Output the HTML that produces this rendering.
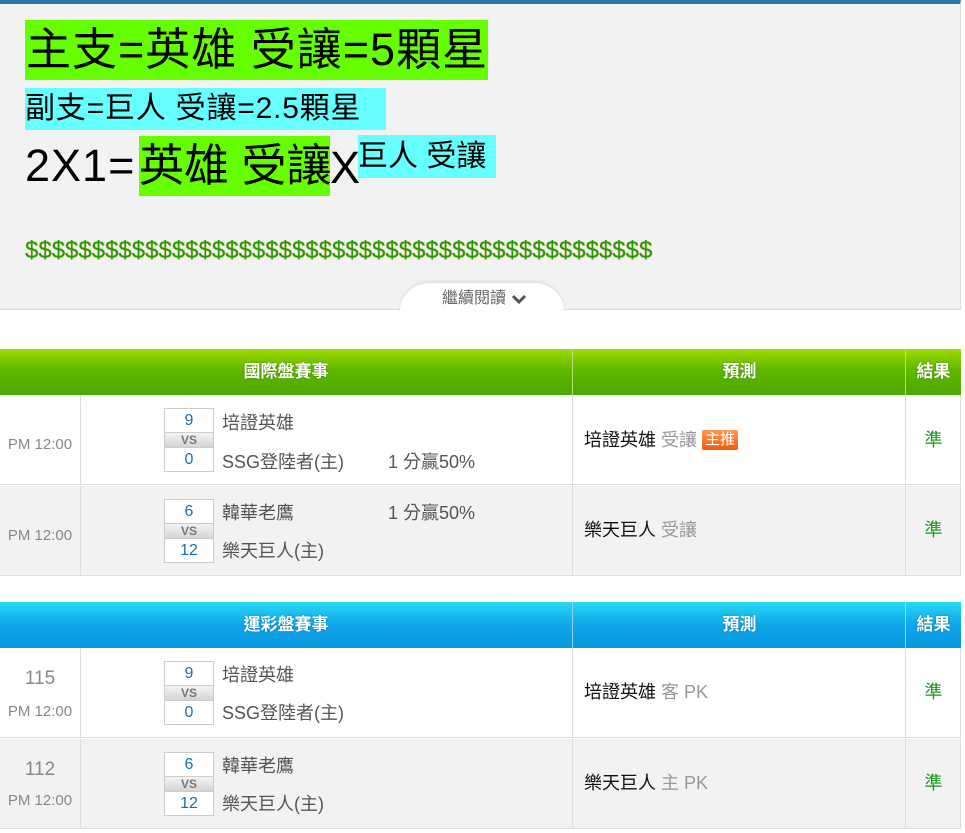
<!DOCTYPE html>
<html><head><meta charset="utf-8"><style>
*{margin:0;padding:0;box-sizing:border-box}
body{width:965px;height:833px;background:#fff;position:relative;overflow:hidden;font-family:"Liberation Sans","Noto Sans CJK TC",sans-serif}
.a{position:absolute;white-space:nowrap}
.top{left:0;top:0;width:961px;height:310px;background:#f2f2f2;border-top:4px solid #2b78a8;border-right:1px solid #ddd;border-bottom:1px solid #ddd}
.g{background:#66ff00}.c{background:#66ffff}
.hdr{height:46px;color:#fff;font-weight:bold;font-size:17px;line-height:46px;text-align:center;text-shadow:0 0 2px rgba(0,0,0,.3)}
.row{left:0;width:961px;height:90px;border-bottom:1px solid #ddd;border-right:1px solid #ddd}
.cell{position:absolute;top:0;height:100%;border-left:1px solid #ddd}
.t{color:#555;font-size:18px;line-height:22px}
.sc{position:absolute;left:164px;width:50px;height:64px;border:1px solid #ccc;background:#fff}
.sc div{text-align:center;color:#1a6fb0;font-size:16px;height:23px;line-height:23px}
.sc .vs{height:16px;line-height:15px;font-size:12px;font-weight:bold;color:#777;background:linear-gradient(#f4f4f4,#d4d4d4);border-top:1px solid #ccc;border-bottom:1px solid #ccc}
.pred{position:absolute;left:584px;font-size:18px;line-height:22px;color:#111}
.pred span{color:#999}
.ok{position:absolute;left:906px;width:55px;text-align:center;color:#159a15;font-size:18px;line-height:22px}
.tm{position:absolute;left:0;width:80px;text-align:center;color:#888;font-size:15px;line-height:18px}
</style></head><body>
<div class="a top"></div>
<div class="a g" style="left:25px;top:20px;width:463px;height:60px;font-size:45px;line-height:60px;padding-left:1px;letter-spacing:1px">主支=英雄 受讓=5顆星</div>
<div class="a c" style="left:25px;top:88px;width:361px;height:42px;font-size:30px;line-height:42px;letter-spacing:0.8px">副支=巨人 受讓=2.5顆星</div>
<div class="a" style="left:25px;top:136px;font-size:45px;line-height:60px;letter-spacing:1px">2X1=</div>
<div class="a g" style="left:139px;top:136px;width:191px;height:60px;font-size:45px;line-height:60px">英雄 受讓</div>
<div class="a" style="left:330px;top:136px;font-size:45px;line-height:64px">X</div>
<div class="a c" style="left:358px;top:135px;width:138px;height:43px;font-size:30px;line-height:43px">巨人 受讓</div>
<div class="a" style="left:25px;top:236px;font-size:24px;line-height:30px;color:#1f9c00;text-shadow:0 0 1px #c80">$$$$$$$$$$$$$$$$$$$$$$$$$$$$$$$$$$$$$$$$$$$$$$$</div>
<div class="a" style="left:400px;top:283px;width:164px;height:30px;background:#fff;border-radius:30px 30px 0 0/28px 28px 0 0;box-shadow:0 -2px 3px rgba(0,0,0,.08)"></div>
<div class="a" style="left:442px;top:289px;font-size:16px;color:#666;line-height:20px">繼續閱讀</div>
<svg class="a" style="left:511px;top:294px" width="16" height="10"><path d="M2 2 L8 8 L14 2" stroke="#555" stroke-width="3" fill="none"/></svg>

<!-- table 1 -->
<div class="a hdr" style="left:0;top:349px;width:961px;background:linear-gradient(#9ddc00,#5fb800 45%,#4aa800)"></div>
<div class="a hdr" style="left:0;top:349px;width:572px">國際盤賽事</div>
<div class="a hdr" style="left:572px;top:349px;width:334px;border-left:1px solid #b8e070">預測</div>
<div class="a hdr" style="left:905px;top:349px;width:56px;border-left:1px solid #b8e070">結果</div>

<div class="a row" style="top:395px;background:#fff">
<div class="cell" style="left:80px"></div><div class="cell" style="left:572px"></div><div class="cell" style="left:905px"></div>
<div class="tm" style="top:41px">PM 12:00</div>
<div class="sc" style="top:13px"><div>9</div><div class="vs">VS</div><div>0</div></div>
<div class="a t" style="left:222px;top:17px">培證英雄</div>
<div class="a t" style="left:222px;top:56px">SSG登陸者(主)</div>
<div class="a t" style="left:388px;top:56px">1 分贏50%</div>
<div class="pred" style="top:34px">培證英雄 <span>受讓</span> <b style="display:inline-block;background:linear-gradient(#ff9a4a,#ee5a10);color:#fff;font-size:15px;font-weight:normal;line-height:20px;padding:0 3px;border-radius:2px;vertical-align:2px">主推</b></div>
<div class="ok" style="top:34px">準</div>
</div>
<div class="a row" style="top:486px;background:#f2f2f2">
<div class="cell" style="left:80px"></div><div class="cell" style="left:572px"></div><div class="cell" style="left:905px"></div>
<div class="tm" style="top:41px">PM 12:00</div>
<div class="sc" style="top:13px"><div>6</div><div class="vs">VS</div><div>12</div></div>
<div class="a t" style="left:222px;top:16px">韓華老鷹</div>
<div class="a t" style="left:388px;top:16px">1 分贏50%</div>
<div class="a t" style="left:222px;top:54px">樂天巨人(主)</div>
<div class="pred" style="top:33px">樂天巨人 <span>受讓</span></div>
<div class="ok" style="top:33px">準</div>
</div>

<!-- table 2 -->
<div class="a hdr" style="left:0;top:602px;width:961px;background:linear-gradient(#28d8f4,#0fa6e8 50%,#0a96e2)"></div>
<div class="a hdr" style="left:0;top:602px;width:572px">運彩盤賽事</div>
<div class="a hdr" style="left:572px;top:602px;width:334px;border-left:1px solid #8fd6f4">預測</div>
<div class="a hdr" style="left:905px;top:602px;width:56px;border-left:1px solid #8fd6f4">結果</div>

<div class="a row" style="top:648px;background:#fff">
<div class="cell" style="left:80px"></div><div class="cell" style="left:572px"></div><div class="cell" style="left:905px"></div>
<div class="tm" style="top:20px;font-size:19px;line-height:22px">115</div>
<div class="tm" style="top:55px">PM 12:00</div>
<div class="sc" style="top:13px"><div>9</div><div class="vs">VS</div><div>0</div></div>
<div class="a t" style="left:222px;top:16px">培證英雄</div>
<div class="a t" style="left:222px;top:54px">SSG登陸者(主)</div>
<div class="pred" style="top:33px">培證英雄 <span>客 PK</span></div>
<div class="ok" style="top:33px">準</div>
</div>
<div class="a row" style="top:739px;background:#f2f2f2">
<div class="cell" style="left:80px"></div><div class="cell" style="left:572px"></div><div class="cell" style="left:905px"></div>
<div class="tm" style="top:20px;font-size:19px;line-height:22px">112</div>
<div class="tm" style="top:53px">PM 12:00</div>
<div class="sc" style="top:13px"><div>6</div><div class="vs">VS</div><div>12</div></div>
<div class="a t" style="left:222px;top:16px">韓華老鷹</div>
<div class="a t" style="left:222px;top:54px">樂天巨人(主)</div>
<div class="pred" style="top:33px">樂天巨人 <span>主 PK</span></div>
<div class="ok" style="top:33px">準</div>
</div>
</body></html>
